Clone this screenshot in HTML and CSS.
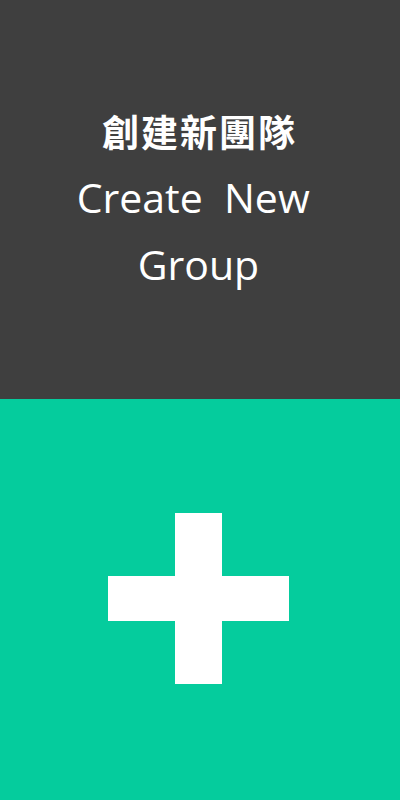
FILE: index.html
```html
<!DOCTYPE html>
<html lang="zh-Hant">
<head>
<meta charset="utf-8">
<title>Create New Group</title>
<link rel="stylesheet" href="styles.css">
</head>
<body>
<main class="tile">
  <section class="tile-head">
    <h1 class="title-zh">創建新團隊</h1>
    <p class="title-en">Create&nbsp; New&nbsp;<br>Group</p>
  </section>
  <button class="tile-add" type="button" aria-label="Create New Group">
    <svg class="plus" width="181" height="171" viewBox="0 0 181 171" aria-hidden="true">
      <rect x="67" y="0" width="47" height="171" fill="#ffffff"/>
      <rect x="0" y="63" width="181" height="45" fill="#ffffff"/>
    </svg>
  </button>
</main>
</body>
</html>
```

FILE: styles.css
```css
html, body {
  margin: 0;
  padding: 0;
}

body {
  width: 400px;
  height: 800px;
  overflow: hidden;
  font-family: "Open Sans", "Noto Sans CJK TC", sans-serif;
}

.tile {
  display: flex;
  flex-direction: column;
  width: 400px;
  height: 800px;
}

.tile-head {
  height: 399px;
  background: #3f3f3f;
  color: #ffffff;
  display: flex;
  flex-direction: column;
  align-items: center;
  padding: 106px 3px 0 0;
  box-sizing: border-box;
}

.title-zh {
  margin: 0;
  font-family: "Noto Sans CJK TC", sans-serif;
  font-weight: 700;
  font-size: 37px;
  line-height: 50px;
  letter-spacing: 2px;
  padding-left: 2px;
}

.title-en {
  margin: 8px 0 0;
  font-family: "Open Sans", sans-serif;
  font-weight: 400;
  font-size: 41px;
  line-height: 67px;
  text-align: center;
}

.tile-add {
  flex: 1;
  border: 0;
  margin: 0;
  padding: 0 3px 2px 0;
  background: #05cc9d;
  display: flex;
  align-items: center;
  justify-content: center;
  cursor: pointer;
}

.plus {
  display: block;
}
```
